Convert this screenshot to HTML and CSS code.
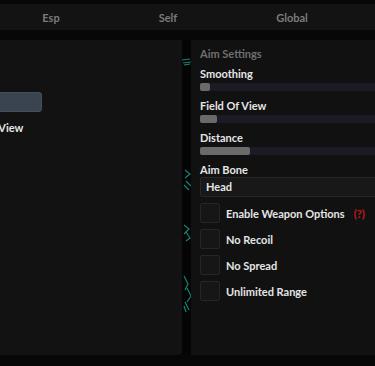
FILE: index.html
```html
<!DOCTYPE html>
<html lang="en">
<head>
    <meta charset="UTF-8">
    <meta name="viewport" content="width=device-width, initial-scale=1.0">
    <title>Aim Settings</title>
    <link rel="stylesheet" href="styles.css">
</head>
<body>

<div class="tabs">
    <div class="tab tab-esp">Esp</div>
    <div class="tab tab-self">Self</div>
    <div class="tab tab-global">Global</div>
</div>

<div class="panels">
    <div class="panel left">
        <div class="left-inner">
            <div class="slate"></div>
            <div class="label">Field Of View</div>
        </div>
    </div>

    <div class="divider">
        <svg width="10" height="315" viewBox="0 0 10 315">
            <g fill="none" stroke="#178377" stroke-width="1.2">
                <path d="M0 20 L8 19 M1 23 L9 22 M2 25 L8 24"/>
                <path d="M3 130 L8 134 L3 138 M4 141 L9 146 M2 145 L7 150"/>
                <path d="M2 185 L7 189 L2 194 M4 192 L8 198 L4 201"/>
                <path d="M2 236 L6 244 L3 250 M5 248 L9 256 L5 262 M3 262 L7 270 M2 266 L4 272"/>
            </g>
        </svg>
    </div>

    <div class="panel right">
        <div class="section-title">Aim Settings</div>

        <div class="label">Smoothing</div>
        <div class="slider"><div class="fill" style="width: 10px"></div></div>

        <div class="label">Field Of View</div>
        <div class="slider"><div class="fill" style="width: 17px"></div></div>

        <div class="label">Distance</div>
        <div class="slider"><div class="fill" style="width: 50px"></div></div>

        <div class="label label-tight">Aim Bone</div>
        <div class="dropdown">Head</div>

        <div class="check-row">
            <div class="box"></div>
            <span>Enable Weapon Options</span>
            <span class="hint">(?)</span>
        </div>
        <div class="check-row">
            <div class="box"></div>
            <span>No Recoil</span>
        </div>
        <div class="check-row">
            <div class="box"></div>
            <span>No Spread</span>
        </div>
        <div class="check-row">
            <div class="box"></div>
            <span>Unlimited Range</span>
        </div>
    </div>
</div>

</body>
</html>
```

FILE: styles.css
```css
body {
    margin: 0;
    height: 366px;
    overflow: hidden;
    background-color: #070707;
    font-family: Lato, "Open Sans", sans-serif;
    font-size: 11px;
    font-weight: 700;
    color: #e6e6e6;
}
.tabs {
    display: flex;
    margin-top: 4px;
    height: 26px;
    background-color: #131313;
}
.tab {
    display: flex;
    align-items: center;
    justify-content: center;
    color: #7b7b7b;
}
.tab-esp {
    width: 102px;
}
.tab-self {
    width: 132px;
}
.tab-global {
    width: 116px;
}
.panels {
    display: flex;
    margin-top: 10px;
    height: 315px;
}
.panel {
    box-sizing: border-box;
    height: 100%;
}
.left {
    width: 182px;
    flex-shrink: 0;
    background-color: #121212;
    border-radius: 0 0 4px 0;
    overflow: hidden;
}
.left-inner {
    margin-left: -43px;
    padding-top: 52px;
}
.slate {
    width: 85px;
    height: 20px;
    background-color: #3a4350;
    border: 1px solid #45505e;
    box-sizing: border-box;
    border-radius: 3px;
    margin-bottom: 9px;
}
.divider {
    width: 9px;
    flex-shrink: 0;
    background-color: #050505;
    overflow: hidden;
}
.right {
    width: 240px;
    flex-shrink: 0;
    background-color: #111111;
    padding: 7px 0 0 9px;
}
.section-title {
    line-height: 14px;
    color: #6f6f6f;
    margin-bottom: 6px;
}
.label {
    line-height: 14px;
    margin-bottom: 2px;
}
.label-tight {
    margin-bottom: 0;
}
.slider {
    height: 8px;
    background-color: #1b1b25;
    border-radius: 2px;
    margin-bottom: 8px;
}
.fill {
    height: 100%;
    background-color: #6a6a6a;
    border-radius: 2px;
}
.dropdown {
    box-sizing: border-box;
    height: 20px;
    line-height: 18px;
    padding-left: 5px;
    background-color: #181818;
    border: 1px solid #262626;
    border-radius: 2px;
    margin-bottom: 6px;
}
.check-row {
    display: flex;
    align-items: center;
    height: 20px;
    margin-bottom: 6px;
}
.box {
    box-sizing: border-box;
    width: 20px;
    height: 20px;
    background-color: #161616;
    border: 1px solid #262626;
    border-radius: 2px;
    margin-right: 6px;
}
.hint {
    color: #c41a1a;
    margin-left: 9px;
}
```
